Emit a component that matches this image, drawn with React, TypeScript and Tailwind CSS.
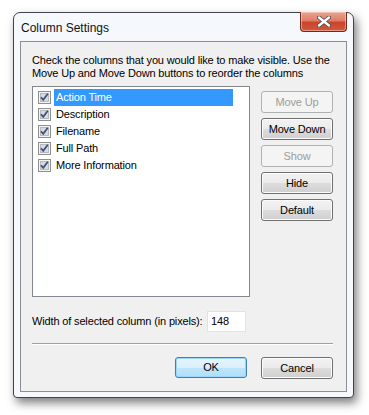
import { useState } from "react";

const columns = [
  "Action Time",
  "Description",
  "Filename",
  "Full Path",
  "More Information",
];

function CheckBox() {
  return (
    <svg width="13" height="13" viewBox="0 0 13 13" className="shrink-0">
      <rect x="0.5" y="0.5" width="12" height="12" fill="#f4f4f4" stroke="#8e8f8f" />
      <rect x="2.5" y="2.5" width="8" height="8" fill="#d9dadb" stroke="#b8b9ba" />
      <path
        d="M3 6.2 L5.2 8.8 L9.8 2.8"
        fill="none"
        stroke="#3a4f80"
        strokeWidth="1.7"
      />
    </svg>
  );
}

function WinButton({
  children,
  disabled,
  primary,
}: {
  children: React.ReactNode;
  disabled?: boolean;
  primary?: boolean;
}) {
  if (disabled) {
    return (
      <div className="w-[72px] h-[22px] flex items-center justify-center rounded-[3px] border border-[#adb2b5] bg-[#f4f4f4] text-[#9c9c9c]">
        {children}
      </div>
    );
  }
  if (primary) {
    return (
      <div className="w-[72px] h-[21px] flex items-center justify-center rounded-[3px] border border-[#3c7fb1] bg-[linear-gradient(#e5f4fc_0%,#dbf0fc_50%,#bee6fd_51%,#b0dff9_100%)] shadow-[inset_0_0_0_1px_#9ad7f8] text-black">
        {children}
      </div>
    );
  }
  return (
    <div className="w-[72px] h-[22px] flex items-center justify-center rounded-[3px] border border-[#707070] bg-[linear-gradient(#f2f2f2_0%,#ebebeb_50%,#dddddd_51%,#cfcfcf_100%)] shadow-[inset_0_0_0_1px_#fcfcfc] text-black">
      {children}
    </div>
  );
}

export default function App() {
  const [selected] = useState(0);

  return (
    <div
      className="w-[369px] h-[415px] bg-white pt-[12px] pl-[13px] text-[11px] text-black"
      style={{ fontFamily: '"Liberation Sans", Arial, sans-serif' }}
    >
      <div className="w-[341px] h-[386px] rounded-t-[7px] rounded-b-[4px] border border-[#404448] bg-[#f5f8fc] px-[6px] flex flex-col shadow-[3px_5px_10px_rgba(0,0,0,0.5)]">
        {/* title bar */}
        <div className="h-[28px] flex items-start justify-between">
          <span className="text-[12px] mt-[6px] ml-[1px] text-[#111]">Column Settings</span>
          <div className="w-[47px] h-[20px] -mt-px rounded-b-[4px] border border-[#6e2a22] border-t-0 bg-[linear-gradient(#e8a492_0%,#dd7e66_45%,#c9452b_55%,#d2583c_100%)] shadow-[inset_0_0_0_1px_rgba(255,220,210,0.5)] flex items-center justify-center">
            <svg width="14" height="11" viewBox="0 0 14 11">
              <path
                d="M2 1.5 L12 9.5 M12 1.5 L2 9.5"
                stroke="#4a4a4a"
                strokeWidth="4"
                strokeLinecap="round"
              />
              <path
                d="M2 1.5 L12 9.5 M12 1.5 L2 9.5"
                stroke="#ffffff"
                strokeWidth="2.4"
                strokeLinecap="round"
              />
            </svg>
          </div>
        </div>

        {/* client area */}
        <div className="w-[327px] h-[351px] border border-[#8b8e93] bg-[#f0f0f0] pl-[11px] pr-[13px] pt-[12px] flex flex-col tracking-[-0.15px]">
          <p className="leading-[13px] whitespace-nowrap">
            Check the columns that you would like to make visible. Use the
            <br />
            Move Up and Move Down buttons to reorder the columns
          </p>

          <div className="flex mt-[6px]">
            <div className="w-[219px] h-[211px] border border-[#828790] bg-white pt-[2px]">
              {columns.map((c, i) => (
                <div key={c} className="h-[17px] flex items-center pl-[5px]">
                  <CheckBox />
                  <span
                    className={
                      i === selected
                        ? "ml-[3px] w-[179px] h-[17px] flex items-center pl-[2px] bg-[#3399ff] text-white"
                        : "ml-[3px] pl-[2px]"
                    }
                  >
                    {c}
                  </span>
                </div>
              ))}
            </div>

            <div className="ml-[11px] mt-[5px] flex flex-col gap-[5px]">
              <WinButton disabled>Move Up</WinButton>
              <WinButton>Move Down</WinButton>
              <WinButton disabled>Show</WinButton>
              <WinButton>Hide</WinButton>
              <WinButton>Default</WinButton>
            </div>
          </div>

          <div className="flex items-center mt-[14px]">
            <span className="w-[175px] whitespace-nowrap">
              Width of selected column (in pixels):
            </span>
            <div className="w-[39px] h-[21px] border border-[#dde3ea] bg-white flex items-center pl-[3px]">
              148
            </div>
          </div>

          <div className="mt-[11px] border-t border-[#a0a0a0] border-b border-b-white" />

          <div className="mt-[12px] flex justify-end gap-[14px]">
            <WinButton primary>OK</WinButton>
            <WinButton>Cancel</WinButton>
          </div>
        </div>
      </div>
    </div>
  );
}
